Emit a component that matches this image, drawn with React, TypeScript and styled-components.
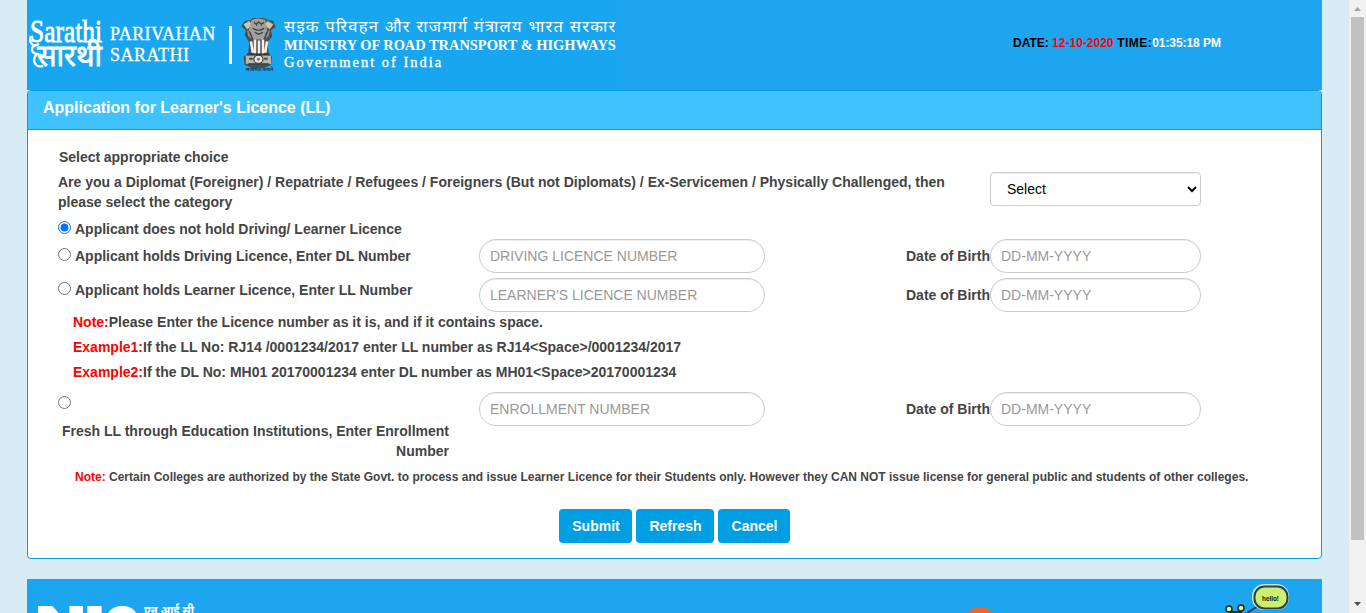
import React from 'react';
import styled, { createGlobalStyle } from 'styled-components';

const Global = createGlobalStyle`
  *, *::before, *::after { box-sizing: border-box; }
  html, body { margin: 0; overflow: hidden; }
  body {
    font-family: "Liberation Sans", Arial, sans-serif;
    font-size: 14px;
    line-height: 20px;
    color: #444;
    background: #d8ecf5;
  }
`;

const Shell = styled.div`
  display: flex;
  height: 613px;
  overflow: hidden;
  background: #d8ecf5;
`;

const Page = styled.div`
  flex: 1;
  min-width: 0;
  padding: 0 27px;
  overflow: hidden;
`;

const Header = styled.header`
  display: flex;
  justify-content: space-between;
  height: 90px;
  background: #1da5f0;
  color: #fff;
`;

const Brand = styled.div`
  display: flex;
  width: 594px;
  height: 90px;
  padding-left: 2px;
  background: #18a6f1;
  & > * { flex-shrink: 0; }
`;

const SarathiLogo = styled.svg`
  width: 74px;
  height: 54px;
  margin-top: 16px;
  overflow: visible;
`;

const BrandName = styled.div`
  width: 126px;
  padding: 24px 0 0 7px;
  font-family: "Liberation Serif", "Times New Roman", serif;
  font-size: 18px;
  line-height: 21px;
  -webkit-text-stroke: 0.3px #fff;
`;

const Fit = styled.span<{ $spacing: number }>`
  display: block;
  white-space: nowrap;
  letter-spacing: ${(p) => p.$spacing}px;
`;

const Divider = styled.div`
  width: 3px;
  height: 38px;
  margin: 26px 11px 0 0;
  background: #fff;
`;

const Emblem = styled.svg`
  width: 32px;
  height: 55px;
  margin: 17px 0 0;
  overflow: visible;
`;

const Ministry = styled.div`
  padding: 16px 0 0 9px;
  font-family: "Liberation Serif", "Times New Roman", serif;
  font-size: 14.45px;
  line-height: 18px;
`;

const Hindi = styled(Fit)`
  height: 20px;
  font-family: "Noto Sans Devanagari", "Noto Sans", sans-serif;
  font-size: 16.5px;
  line-height: 24px;
`;

const MinistryName = styled(Fit)`
  font-weight: bold;
`;

const Government = styled(Fit)`
  line-height: 16px;
  -webkit-text-stroke: 0.35px #fff;
`;

const Clock = styled.div`
  width: 309px;
  padding-top: 33px;
  font-size: 12px;
  font-weight: bold;
  white-space: nowrap;
`;

const Ink = styled.span<{ $color: string; $spacing?: number }>`
  color: ${(p) => p.$color};
  letter-spacing: ${(p) => p.$spacing ?? 0}px;
`;

const Panel = styled.section`
  height: 469px;
  background: #fff;
  border: 1px solid #029edf;
  border-radius: 4px;
  overflow: hidden;
`;

const PanelTitle = styled.h1`
  height: 39px;
  margin: 0;
  padding: 6px 15px;
  background: #40c2ff;
  border-bottom: 1px solid #1b95da;
  color: #fff;
  font-size: 16px;
  line-height: 21px;
`;

const Form = styled.div`
  padding: 17px 30px 0;
  font-weight: bold;
`;

const Intro = styled.div`
  padding-left: 1px;
  margin-bottom: 5px;
  letter-spacing: -0.04px;
`;

const Row = styled.div<{ $h: number; $gap?: number }>`
  display: grid;
  grid-template-columns: 421px 286px 225px 211px;
  height: ${(p) => p.$h}px;
  margin-bottom: ${(p) => p.$gap ?? 0}px;
`;

const Question = styled.div`
  grid-column: 1 / 4;
  width: 910px;
`;

const Choice = styled.label<{ $top: number }>`
  display: flex;
  padding-top: ${(p) => p.$top}px;
  white-space: nowrap;
`;

const Radio = styled.input`
  width: 13px;
  height: 13px;
  margin: 2px 4px 0 0;
`;

const Select = styled.select`
  width: 211px;
  height: 34px;
  padding: 6px 12px;
  border: 1px solid #ccc;
  border-radius: 4px;
  background: #fff;
  color: #000;
  font: 14px/20px "Liberation Sans", Arial, sans-serif;
  box-shadow: inset 0 1px 1px rgba(0, 0, 0, 0.075);
`;

const Field = styled.input`
  width: 100%;
  height: 34px;
  padding: 6px 10px;
  border: 1px solid #ccc;
  border-radius: 17px;
  background: #fff;
  font: 14px/20px "Liberation Sans", Arial, sans-serif;
  box-shadow: inset 0 1px 1px rgba(0, 0, 0, 0.075);
  &::placeholder { color: #999; opacity: 1; }
`;

const DobLabel = styled.div`
  padding-top: 7px;
  text-align: right;
`;

const Hint = styled.div`
  padding-left: 15px;
  margin-bottom: 5px;
  white-space: nowrap;
`;

const Hints = styled.div`
  padding-bottom: 5px;
`;

const Enrollment = styled.div`
  width: 391px;
  text-align: right;
  margin-top: 12px;
`;

const SmallNote = styled.div`
  padding-left: 17px;
  font-size: 12px;
  white-space: nowrap;
`;

const Actions = styled.div`
  display: flex;
  gap: 4px;
  margin-top: 22px;
  padding-left: 501px;
`;

const Button = styled.button<{ $w: number }>`
  width: ${(p) => p.$w}px;
  height: 34px;
  padding: 0 0 0 1px;
  border: 0;
  border-radius: 4px;
  background: #009ee2;
  color: #fff;
  font: bold 14px/20px "Liberation Sans", Arial, sans-serif;
`;

const Footer = styled.footer`
  display: flex;
  height: 100px;
  margin-top: 20px;
  background: #1da5f0;
  color: #fff;
`;

const Nic = styled.svg`
  width: 170px;
  height: 70px;
  margin-left: 8px;
`;

const FooterArt = styled.svg`
  width: 360px;
  height: 34px;
  margin-left: auto;
`;

const Scrollbar = styled.div`
  display: flex;
  flex-direction: column;
  align-items: center;
  width: 17px;
  background: #f1f1f1;
`;

const Arrow = styled.svg`
  width: 17px;
  height: 17px;
`;

const Thumb = styled.div`
  width: 13px;
  height: 523px;
  margin-bottom: auto;
  background: #c1c1c1;
`;

function Lions() {
  return (
    <Emblem viewBox="3.5 2 28 54" preserveAspectRatio="none">
      <path d="M5 6l5-1 2-2h10l3 2 5 1 2 6-4 3 1 6-4 6 1 11 3 3-1 8-6 3H11l-6-3-1-8 4-3 1-11-4-7 1-5-4-4z" fill="#4b4f51" />
      <path d="M4 9l5-3 3 4-5 4zM30 9l-5-3-3 4 5 4z" fill="#cfc3b4" />
      <path d="M11 5q6-3 12 0l2 12-4 7h-8l-5-7z" fill="#a29f99" />
      <path d="M7 15l4 2 1 7-4-3zM27 15l-4 2-1 7 4-3z" fill="#918d87" />
      <path d="M13 7l2 2 2-2 3 2 2-2M12 13q5 4 10 0M15 10h1M19 10h1M14 17l3 2 4-2M9 16l3 8M25 16l-3 8" fill="none" stroke="#333c43" strokeWidth="1.1" />
      <path d="M10.500 26l1.500 11M14 24v14M17.500 25v13M21 24v14M24.500 26l-1.500 11" stroke="#f5f0e6" strokeWidth="2.200" />
      <path d="M6 40h22v8H6z" fill="#bcb7ae" />
      <path d="M7 38.500h20M8 48h18" stroke="#34383b" strokeWidth="1.4" />
      <circle cx="17" cy="43.500" r="4" fill="#eeeae2" stroke="#34383b" />
      <circle cx="17" cy="43.500" r="1.4" fill="#777" />
      <path d="M9 43h3M22 43h3" stroke="#444" strokeWidth="2" />
      <text x="6" y="55" fontSize="5" fontWeight="bold" textLength="24" lengthAdjust="spacingAndGlyphs" fill="#173c5a" fontFamily="Noto Sans Devanagari, sans-serif">सत्यमेव जयते</text>
    </Emblem>
  );
}

interface EntryProps {
  label: React.ReactNode;
  placeholder: string;
  h: number;
  gap?: number;
}

function Entry({ label, placeholder, h, gap }: EntryProps) {
  return (
    <Row $h={h} $gap={gap}>
      {label}
      <Field placeholder={placeholder} />
      <DobLabel>Date of Birth</DobLabel>
      <Field placeholder="DD-MM-YYYY" />
    </Row>
  );
}

export default function App() {
  return (
    <Shell>
      <Global />
      <Page>
        <Header>
          <Brand>
            <SarathiLogo viewBox="0 0 74 54" fill="#fff" stroke="#fff">
              <text x="1" y="25.500" fontSize="32" strokeWidth=".8" textLength="72" lengthAdjust="spacingAndGlyphs" fontFamily="Liberation Serif, serif">Sarathi</text>
              <text x="8" y="50" fontSize="31" strokeWidth=".8" textLength="65" lengthAdjust="spacingAndGlyphs" fontFamily="Noto Sans Devanagari, sans-serif">सारथी</text>
              <path d="M2 20c-3 8 3 11 8 8M7 29c-6 2-5 8 1 9-6 6-2 14 6 12" fill="none" strokeWidth="2.400" />
            </SarathiLogo>
            <BrandName>
              <Fit $spacing={0.4}>PARIVAHAN</Fit>
              <Fit $spacing={0.5}>SARATHI</Fit>
            </BrandName>
            <Divider />
            <Lions />
            <Ministry>
              <Hindi $spacing={1.27}>सइक परिवहन और राजमार्ग मंत्रालय भारत सरकार</Hindi>
              <MinistryName $spacing={-0.02}>MINISTRY OF ROAD TRANSPORT &amp; HIGHWAYS</MinistryName>
              <Government $spacing={2}>Government of India</Government>
            </Ministry>
          </Brand>
          <Clock>
            <Ink $color="#000">DATE: </Ink>
            <Ink $color="#f00">12-10-2020</Ink>
            <Ink $color="#000" $spacing={0.45}> TIME:</Ink>
            <Ink $color="#fff" $spacing={-0.07}>01:35:18 PM</Ink>
          </Clock>
        </Header>
        <Panel>
          <PanelTitle>Application for Learner's Licence (LL)</PanelTitle>
          <Form>
            <Intro>Select appropriate choice</Intro>
            <Row $h={47}>
              <Question>
                Are you a Diplomat (Foreigner) / Repatriate / Refugees / Foreigners (But not Diplomats) / Ex-Servicemen / Physically Challenged, then please select the category
              </Question>
              <Select><option>Select</option></Select>
            </Row>
            <Row $h={20}>
              <Choice $top={0}><Radio type="radio" name="holder" defaultChecked />Applicant does not hold Driving/ Learner Licence</Choice>
            </Row>
            <Entry
              h={34}
              gap={5}
              placeholder="DRIVING LICENCE NUMBER"
              label={<Choice $top={7}><Radio type="radio" name="holder" />Applicant holds Driving Licence, Enter DL Number</Choice>}
            />
            <Entry
              h={34}
              placeholder="LEARNER'S LICENCE NUMBER"
              label={<Choice $top={2}><Radio type="radio" name="holder" />Applicant holds Learner Licence, Enter LL Number</Choice>}
            />
            <Hints>
              <Hint><Ink $color="#f00">Note:</Ink>Please Enter the Licence number as it is, and if it contains space.</Hint>
              <Hint><Ink $color="#f00">Example1:</Ink>If the LL No: RJ14 /0001234/2017 enter LL number as RJ14&lt;Space&gt;/0001234/2017</Hint>
              <Hint><Ink $color="#f00">Example2:</Ink>If the DL No: MH01 20170001234 enter DL number as MH01&lt;Space&gt;20170001234</Hint>
            </Hints>
            <Entry
              h={75}
              placeholder="ENROLLMENT NUMBER"
              label={
                <div>
                  <Choice $top={2}><Radio type="radio" name="holder" /></Choice>
                  <Enrollment>Fresh LL through Education Institutions, Enter Enrollment Number</Enrollment>
                </div>
              }
            />
            <SmallNote><Ink $color="#f00">Note:</Ink> Certain Colleges are authorized by the State Govt. to process and issue Learner Licence for their Students only. However they CAN NOT issue license for general public and students of other colleges.</SmallNote>
            <Actions>
              <Button $w={73}>Submit</Button>
              <Button $w={78}>Refresh</Button>
              <Button $w={72}>Cancel</Button>
            </Actions>
          </Form>
        </Panel>
        <Footer>
          <Nic viewBox="0 0 170 70" fill="#fff">
            <g fontSize="45" fontWeight="900" fontFamily="Inter, sans-serif">
              <text x="0" y="60" textLength="51" lengthAdjust="spacingAndGlyphs">N</text>
              <text x="49" y="60" textLength="21" lengthAdjust="spacingAndGlyphs">I</text>
              <text x="69" y="60" textLength="35" lengthAdjust="spacingAndGlyphs">C</text>
            </g>
            <text x="109" y="36" fontSize="13" fontWeight="bold" textLength="50" lengthAdjust="spacingAndGlyphs" fontFamily="Noto Sans Devanagari, sans-serif">एन.आई.सी</text>
          </Nic>
          <FooterArt viewBox="0 0 360 34">
            <circle cx="18" cy="44" r="16" fill="#f26522" />
            <path d="M285 34l14-9" stroke="#2b3a3a" strokeWidth="2" />
            <rect x="290" y="5" width="37" height="26" rx="12" fill="#c5e8f8" />
            <rect x="292.500" y="7.500" width="33" height="22" rx="10" fill="#cbef72" stroke="#304040" strokeWidth="2" />
            <text x="300" y="22" fontSize="8" fontWeight="bold" textLength="17" lengthAdjust="spacingAndGlyphs" fill="#111">hello!</text>
            <circle cx="267" cy="30" r="3" fill="#d9f5a0" stroke="#203018" strokeWidth="1.500" />
            <circle cx="279" cy="29" r="3" fill="#d9f5a0" stroke="#203018" strokeWidth="1.500" />
            <path d="M268 33h12" stroke="#203018" strokeWidth="2" />
          </FooterArt>
        </Footer>
      </Page>
      <Scrollbar>
        <Arrow viewBox="0 0 17 17"><path d="M5 11l3.500-4 3.500 4z" fill="#a3a3a3" /></Arrow>
        <Thumb />
        <Arrow viewBox="0 0 17 17"><path d="M5 6l3.500 4 3.500-4z" fill="#505050" /></Arrow>
      </Scrollbar>
    </Shell>
  );
}
